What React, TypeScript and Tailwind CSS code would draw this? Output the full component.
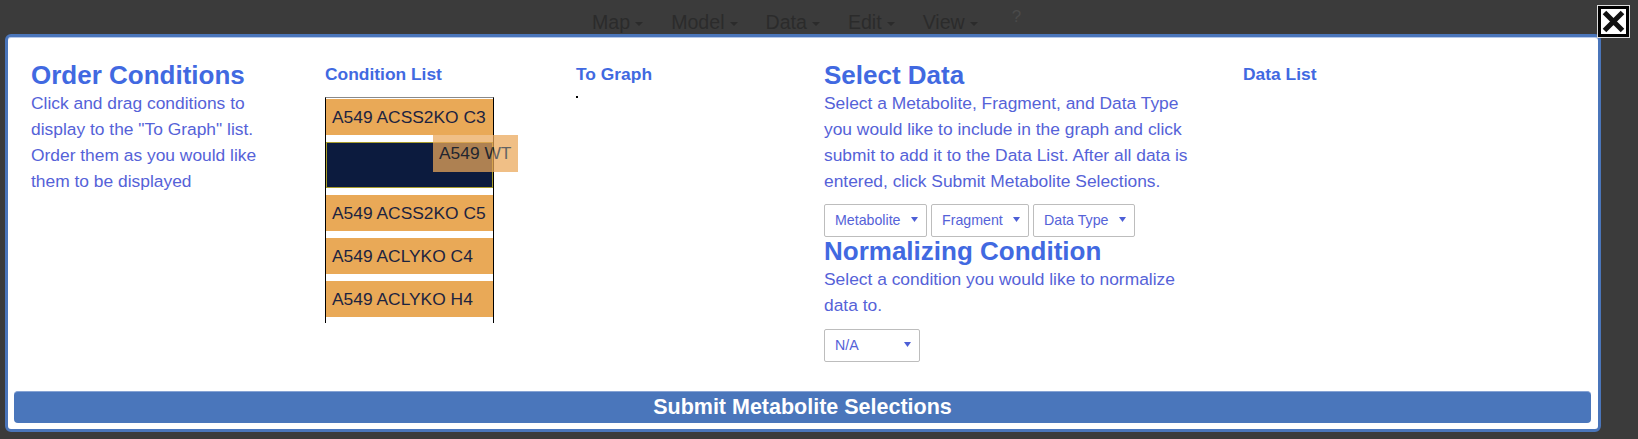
import React from 'react'

const conditions = ['A549 ACSS2KO C3', 'A549 ACSS2KO C5', 'A549 ACLYKO C4', 'A549 ACLYKO H4']

const menu = ['Map', 'Model', 'Data', 'Edit', 'View']

const Arrow: React.FC = () => (
  <svg width="7" height="5" viewBox="0 0 7 5" className="mb-[3px] shrink-0">
    <path d="M0 0 L7 0 L3.5 5 Z" fill="#4d5fd6" />
  </svg>
)

const FakeSelect: React.FC<{ label: string; width: string }> = ({ label, width }) => (
  <div
    className={`${width} h-[33px] border border-[#bdbdbd] rounded-[2px] bg-white flex items-center justify-between pl-[10px] pr-[8px] text-[14.2px] text-[#5562d8]`}
  >
    <span>{label}</span>
    <Arrow />
  </div>
)

const App: React.FC = () => {
  return (
    <div className="relative w-[1638px] h-[439px] overflow-hidden bg-[#3b3b3b] font-['Liberation_Sans',Arial,sans-serif]">
      {/* page menu behind the overlay */}
      <div className="h-[34px] flex items-start pl-[592px] pt-[13px] gap-[28px] text-[19.6px] leading-none text-[#2b2b2b]">
        {menu.map((m) => (
          <div key={m} className="flex items-center">
            <span>{m}</span>
            <span className="ml-[5px] mt-[3px] w-0 h-0 border-l-[4px] border-r-[4px] border-t-[4px] border-l-transparent border-r-transparent border-t-[#2b2b2b]" />
          </div>
        ))}
        <span className="-mt-[5px] ml-[6px] text-[17px] text-[#4a4a4a]">?</span>
      </div>

      {/* modal */}
      <div className="ml-[5px] w-[1596px] h-[398px] border-[3px] border-[#4a75ba] rounded-[6px] bg-white shadow-[inset_0_1px_0_#b6c8e8] flex flex-col">
        <div className="flex-1 flex pl-[23px] pt-[24px]">
          {/* Order Conditions */}
          <div className="w-[294px]">
            <h2 className="text-[26px] leading-[29px] font-bold text-[#4169e1]">Order Conditions</h2>
            <p className="w-[250px] text-[17.4px] leading-[26px] text-[#5562d8]">
              Click and drag conditions to display to the "To Graph" list. Order them as you would like them to be displayed
            </p>
          </div>

          {/* Condition List */}
          <div className="w-[251px]">
            <h3 className="text-[17.4px] leading-[26px] font-bold text-[#4169e1]">Condition List</h3>
            <div className="relative mt-[10px] w-[169px] border-x border-x-black border-t border-t-[#8a8a8a] pt-[1px] pb-[6px] flex flex-col gap-[7px]">
              <div className="h-[36px] bg-[#e9a957] pl-[6px] text-[17.4px] leading-[36px] text-[#1c2340]">{conditions[0]}</div>
              <div className="h-[46px] bg-[#0c1b3e] border border-[#a89c2c]" />
              {conditions.slice(1).map((c) => (
                <div key={c} className="h-[36px] bg-[#e9a957] pl-[6px] text-[17.4px] leading-[36px] text-[#1c2340]">
                  {c}
                </div>
              ))}
              {/* dragged item */}
              <div className="absolute left-[107px] top-[37px] w-[85px] h-[37px] bg-[#eba85a] opacity-[0.73] pl-[6px] text-[17.4px] leading-[37px] text-[#2a2a2a]">
                A549 WT
              </div>
            </div>
          </div>

          {/* To Graph */}
          <div className="w-[248px]">
            <h3 className="text-[17.4px] leading-[26px] font-bold text-[#4169e1]">To Graph</h3>
            <div className="mt-[9px] w-[2px] h-[2px] bg-black" />
          </div>

          {/* Select Data */}
          <div className="w-[419px]">
            <h2 className="text-[26px] leading-[29px] font-bold text-[#4169e1]">Select Data</h2>
            <p className="w-[372px] text-[17.4px] leading-[26px] text-[#5562d8]">
              Select a Metabolite, Fragment, and Data Type you would like to include in the graph and click submit to add it to the Data List. After all data is entered, click Submit Metabolite Selections.
            </p>
            <div className="mt-[10px] flex gap-[4px]">
              <FakeSelect label="Metabolite" width="w-[103px]" />
              <FakeSelect label="Fragment" width="w-[98px]" />
              <FakeSelect label="Data Type" width="w-[102px]" />
            </div>
            <h2 className="text-[26px] leading-[29px] font-bold text-[#4169e1]">Normalizing Condition</h2>
            <p className="w-[372px] text-[17.4px] leading-[26px] text-[#5562d8]">
              Select a condition you would like to normalize data to.
            </p>
            <div className="mt-[11px]">
              <FakeSelect label="N/A" width="w-[96px]" />
            </div>
          </div>

          {/* Data List */}
          <div className="flex-1">
            <h3 className="text-[17.4px] leading-[26px] font-bold text-[#4169e1]">Data List</h3>
          </div>
        </div>

        <button className="ml-[6px] mb-[6px] w-[1577px] h-[32px] rounded-[4px] bg-[#4a76bb] border-t border-t-[#86a3d4] text-white font-bold text-[21.5px] flex items-center justify-center">
          Submit Metabolite Selections
        </button>
      </div>

      {/* close button */}
      <div className="absolute left-[1597px] top-[5px] w-[33px] h-[33px] bg-white border border-[#dcdcdc]">
        <div className="w-full h-full border-[3px] border-black bg-white flex items-center justify-center">
          <svg width="23" height="23" viewBox="0 0 23 23">
            <path d="M2.5 2.5 L20.5 20.5 M20.5 2.5 L2.5 20.5" stroke="#111" strokeWidth="5" strokeLinecap="butt" />
          </svg>
        </div>
      </div>
    </div>
  )
}

export default App
